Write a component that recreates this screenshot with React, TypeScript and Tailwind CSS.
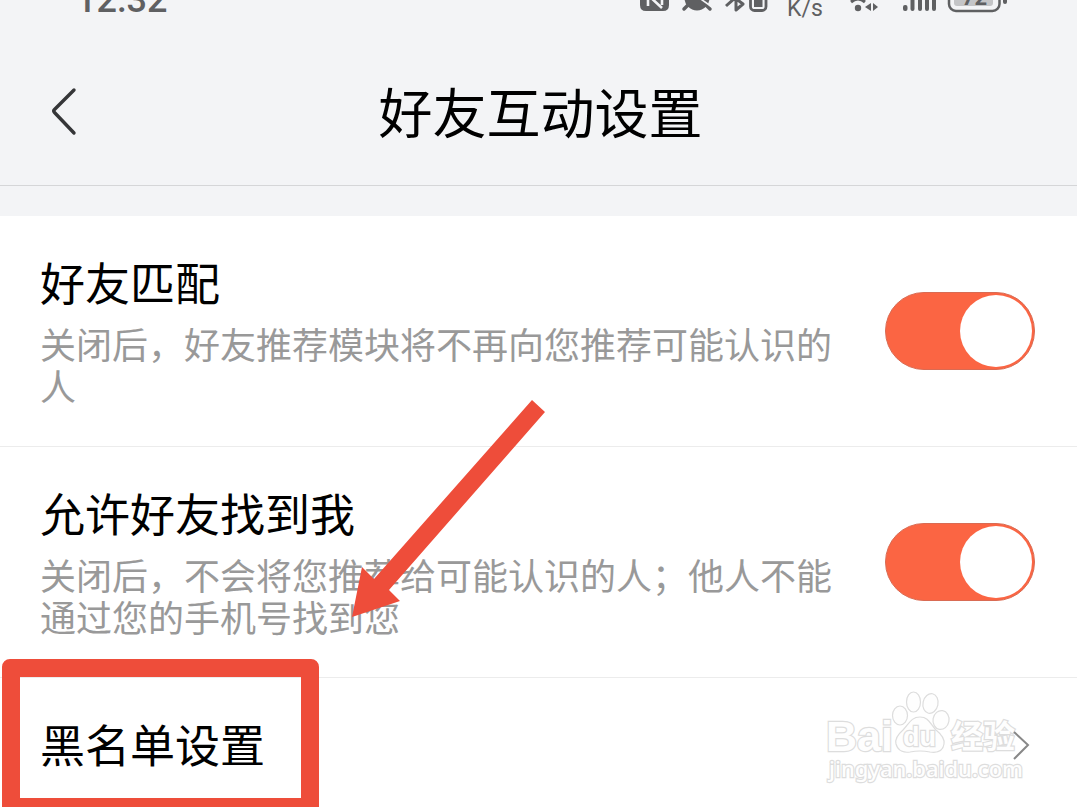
import { useState } from "react";

const cjk = "font-['Noto_Sans_CJK_SC',sans-serif]";

function StatusBar() {
  return (
    <div className="relative h-10 overflow-hidden font-[Roboto,sans-serif] text-[#5f6062]">
      <div className="-mt-6 flex items-start justify-between pl-[76px] pr-[68px]">
        <span className="text-4xl leading-[48px] font-medium">12:32</span>
        <div className="flex items-start pt-6">
          <svg width="130" height="16" viewBox="639 0 130 16" aria-hidden="true">
            <path d="M640-12h29V5q0 6-6 6h-17q-6 0-6-6z" fill="currentColor" />
            <path d="M648-8V6M648-5l14 13M662-6V5" stroke="#f3f4f6" strokeWidth="2.600" fill="none" />
            <circle cx="697" cy="-2" r="12.500" fill="currentColor" />
            <path d="M688 5l-4 4M706 5l4 4" stroke="currentColor" strokeWidth="3.500" strokeLinecap="round" />
            <path d="M698-3l14 10" stroke="#f3f4f6" strokeWidth="1.600" />
            <path d="M726 6l9-8 8 6-7 6V-8" stroke="currentColor" strokeWidth="3" fill="none" strokeLinejoin="round" />
            <rect x="750.500" y="-14" width="15.500" height="24.500" rx="4" stroke="currentColor" strokeWidth="2.800" fill="none" />
            <rect x="754" y="-8" width="8.500" height="15" fill="currentColor" />
          </svg>
          <span className="ml-[18px] w-[46px] text-[23px] leading-[18px]">K/s</span>
          <svg className="ml-4" width="160" height="16" viewBox="849 0 160 16" aria-hidden="true">
            <circle cx="858" cy="8" r="3.200" fill="currentColor" />
            <path d="M851 2q7-6 14 0" stroke="currentColor" strokeWidth="3" fill="none" />
            <path d="M871 3v8l-6-4zM873 3v8l5-4z" fill="currentColor" />
            <rect x="903" y="5" width="4.500" height="6" rx="2" fill="currentColor" />
            <rect x="910.500" y="-4" width="4" height="15" rx="2" fill="currentColor" />
            <rect x="918" y="-8" width="4" height="19" rx="2" fill="currentColor" />
            <rect x="925" y="-12" width="4" height="23" rx="2" fill="currentColor" />
            <rect x="932" y="-16" width="4" height="27" rx="2" fill="currentColor" />
            <rect x="949" y="-16" width="50.500" height="27" rx="7" fill="none" stroke="currentColor" strokeWidth="2.500" />
            <path d="M954-8h39V3q0 3-3 3h-33q-3 0-3-3z" fill="#c4c5c7" />
            <rect x="1003" y="-8" width="4" height="12" rx="2" fill="currentColor" />
            <text x="962" y="5" fontSize="22" fontWeight="700" fill="currentColor">72</text>
          </svg>
        </div>
      </div>
    </div>
  );
}

function Header() {
  return (
    <header className="relative flex h-[146px] items-center justify-center border-b border-[#d5d6d8]">
      <button type="button" aria-label="返回" className="absolute left-10 top-[43px] flex h-14 w-12 items-center justify-center">
        <svg width="28" height="50" viewBox="50 86 28 50" fill="none" stroke="#353638" strokeWidth="3.400" strokeLinecap="round" strokeLinejoin="round" aria-hidden="true">
          <path d="M74 90L54.500 109.500q-1.500 1.500 0 3L74 133" />
        </svg>
      </button>
      <h1 className="pb-1 pl-1 text-[54px] leading-[72px] text-black">好友互动设置</h1>
    </header>
  );
}

function ToggleRow({ id, title, text, children }: { id: string; title: string; text: string; children?: React.ReactNode }) {
  const [on, setOn] = useState(true);
  return (
    <section className="relative flex items-center gap-10 border-b border-[#ececec] py-9 pl-10 pr-[42px]">
      <div className="min-w-0 flex-1 pb-1">
        <label htmlFor={id} className="block text-[45px] leading-[60px] text-black">{title}</label>
        <p id={`${id}-text`} className="mt-[10px] text-4xl leading-[42px] text-[#999999]">{text}</p>
      </div>
      <input
        id={id}
        type="checkbox"
        role="switch"
        aria-describedby={`${id}-text`}
        checked={on}
        onChange={() => setOn(!on)}
        className="flex h-[78px] w-[150px] shrink-0 cursor-pointer appearance-none items-center rounded-full border border-[#d96b53] bg-gray-300 px-[2px] before:block before:size-[72px] before:rounded-full before:bg-white checked:justify-end checked:bg-[#fb6543]"
      />
      {children}
    </section>
  );
}

function Arrow() {
  return (
    <svg className="pointer-events-none absolute -top-[47px] left-[350px]" width="196" height="220" viewBox="350 400 196 220" aria-hidden="true">
      <path d="M352 617L362 567L374 579L532 400L545 412L389 590L400 601Z" fill="#ee4d3a" />
    </svg>
  );
}

function Watermark() {
  return (
    <svg className="pointer-events-none absolute right-[53px] top-3" width="200" height="100" viewBox="824 690 200 100" fill="#fefefe" stroke="#dddddd" strokeWidth="1.200" aria-hidden="true">
      <g strokeWidth="2.400" style={{ paintOrder: "stroke" }}>
        <text x="826" y="751" fontSize="43" fontWeight="700" fontFamily="Liberation Sans, sans-serif">Bai</text>
        <text x="951" y="748" fontSize="32" fontWeight="700" fontFamily="Noto Sans CJK SC, sans-serif">经验</text>
        <text x="829" y="777" fontSize="22" fontWeight="500" fontFamily="Noto Sans, sans-serif">jingyan.baidu.com</text>
      </g>
      <ellipse cx="900" cy="715.500" rx="7.500" ry="9.500" />
      <ellipse cx="913.500" cy="702" rx="7" ry="10" />
      <ellipse cx="930.500" cy="703.500" rx="7.500" ry="10" transform="rotate(12 930.500 703.500)" />
      <ellipse cx="941" cy="720" rx="8" ry="9.500" transform="rotate(10 941 720)" />
      <path d="M920 717C911 717 909 724 903 730C896 736 895 740 896 744C898 751 904 753 910 752Q920 750 930 752C937 753 943 751 944 744C945 738 941 734 936 730C930 724 929 717 920 717Z" />
      <text x="903" y="746" fontSize="27" fontWeight="700" fontFamily="Liberation Sans, sans-serif" strokeWidth="2.400" style={{ paintOrder: "stroke" }}>du</text>
    </svg>
  );
}

function BlacklistRow() {
  return (
    <section className="relative">
      <Watermark />
      <a href="#blacklist" className="relative flex items-center justify-between py-9 pl-10 pr-[46px]">
        <span className="pb-1 text-[45px] leading-[60px] text-black">黑名单设置</span>
        <svg width="18" height="30" viewBox="0 0 18 30" fill="none" stroke="#888888" strokeWidth="2" aria-hidden="true">
          <path d="M1 1L15 14L1 28" />
        </svg>
      </a>
      <div className="pointer-events-none absolute -top-[19px] left-[2px] h-[157px] w-[317px] rounded-lg border-[18px] border-[#ee4d3a]" />
    </section>
  );
}

export default function App() {
  return (
    <div className={`${cjk} h-screen overflow-hidden bg-[#f3f4f6]`} lang="zh-CN">
      <StatusBar />
      <Header />
      <main className="mt-[30px] min-h-full bg-white">
        <ToggleRow id="match" title="好友匹配" text="关闭后，好友推荐模块将不再向您推荐可能认识的人" />
        <ToggleRow id="discover" title="允许好友找到我" text="关闭后，不会将您推荐给可能认识的人；他人不能通过您的手机号找到您">
          <Arrow />
        </ToggleRow>
        <BlacklistRow />
      </main>
    </div>
  );
}
